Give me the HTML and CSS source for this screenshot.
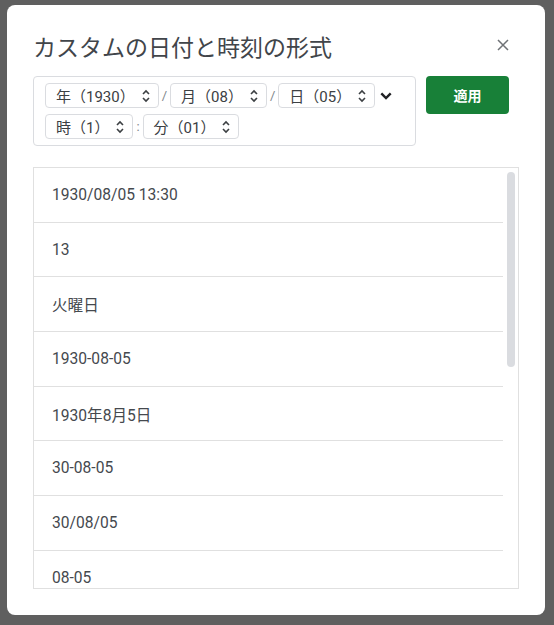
FILE: index.html
```html
<!DOCTYPE html>
<html lang="ja">
<head>
<meta charset="utf-8">
<title>カスタムの日付と時刻の形式</title>
<link rel="stylesheet" href="styles.css">
</head>
<body>
<div class="dialog">
  <div class="header">
    <div class="title">カスタムの日付と時刻の形式</div>
    <div class="close">
      <svg width="12" height="12" viewBox="0 0 12 12"><path d="M1 1 L11 11 M11 1 L1 11" stroke="#6f7276" stroke-width="1.5" fill="none"/></svg>
    </div>
  </div>
  <div class="format-row">
    <div class="format-box">
      <span class="chip">年（1930）<svg class="updown" width="8" height="14" viewBox="0 0 8 14"><path d="M1 5 L4 2 L7 5 M1 9 L4 12 L7 9" stroke="#3c4043" stroke-width="1.6" fill="none"/></svg></span>
      <span class="sep">/</span>
      <span class="chip">月（08）<svg class="updown" width="8" height="14" viewBox="0 0 8 14"><path d="M1 5 L4 2 L7 5 M1 9 L4 12 L7 9" stroke="#3c4043" stroke-width="1.6" fill="none"/></svg></span>
      <span class="sep">/</span>
      <span class="chip">日（05）<svg class="updown" width="8" height="14" viewBox="0 0 8 14"><path d="M1 5 L4 2 L7 5 M1 9 L4 12 L7 9" stroke="#3c4043" stroke-width="1.6" fill="none"/></svg></span>
      <span class="more"><svg width="12" height="8" viewBox="0 0 12 8"><path d="M1.3 1.3 L6 6 L10.7 1.3" stroke="#202124" stroke-width="2.4" fill="none"/></svg></span>
      <span class="chip">時（1）<svg class="updown" width="8" height="14" viewBox="0 0 8 14"><path d="M1 5 L4 2 L7 5 M1 9 L4 12 L7 9" stroke="#3c4043" stroke-width="1.6" fill="none"/></svg></span>
      <span class="sep">:</span>
      <span class="chip">分（01）<svg class="updown" width="8" height="14" viewBox="0 0 8 14"><path d="M1 5 L4 2 L7 5 M1 9 L4 12 L7 9" stroke="#3c4043" stroke-width="1.6" fill="none"/></svg></span>
    </div>
    <button class="apply">適用</button>
  </div>
  <div class="list">
    <div class="rows">
      <div class="row">1930/08/05 13:30</div>
      <div class="row">13</div>
      <div class="row">火曜日</div>
      <div class="row">1930-08-05</div>
      <div class="row">1930年8月5日</div>
      <div class="row">30-08-05</div>
      <div class="row">30/08/05</div>
      <div class="row">08-05</div>
    </div>
    <div class="track"><div class="thumb"></div></div>
  </div>
</div>
</body>
</html>
```

FILE: styles.css
```css
html, body {
  margin: 0;
  padding: 0;
  background: #5f5f5f;
  font-family: Roboto, "Noto Sans CJK JP", sans-serif;
  color: #3c4043;
}

.dialog {
  margin: 5px 0 0 7px;
  width: 538px;
  height: 610px;
  box-sizing: border-box;
  background: #ffffff;
  border-radius: 8px;
  padding: 0 26px 26px 26px;
  display: flex;
  flex-direction: column;
}

.header {
  display: flex;
  align-items: center;
  justify-content: space-between;
  height: 46px;
  margin-top: 18px;
  margin-bottom: 7px;
}

.title {
  font-family: "Noto Sans CJK JP", sans-serif;
  font-size: 23px;
  font-weight: 400;
  color: #41454a;
  white-space: nowrap;
}

.close {
  width: 24px;
  height: 24px;
  margin-right: 4px;
  margin-top: -3px;
  display: flex;
  align-items: center;
  justify-content: center;
}

.format-row {
  display: flex;
  align-items: flex-start;
}

.format-box {
  width: 383px;
  box-sizing: border-box;
  border: 1px solid #dadce0;
  border-radius: 4px;
  padding: 6px 8px 6px 11px;
  display: flex;
  flex-wrap: wrap;
  align-items: center;
  row-gap: 6px;
}

.chip {
  display: inline-flex;
  align-items: center;
  height: 25px;
  box-sizing: border-box;
  border: 1px solid #dadce0;
  border-radius: 4px;
  padding: 0 8px 0 10px;
  font-size: 15px;
  color: #3c4043;
  white-space: nowrap;
}

.updown {
  margin-left: 7px;
  flex: none;
}

.sep {
  font-size: 13px;
  color: #80868b;
  padding: 0 3px;
}

.more {
  display: inline-flex;
  align-items: center;
  margin-left: 5px;
  height: 25px;
  width: 12px;
}

.apply {
  margin-left: 10px;
  width: 83px;
  height: 38px;
  border: none;
  border-radius: 4px;
  background: #188038;
  color: #ffffff;
  font-family: "Noto Sans CJK JP", sans-serif;
  font-size: 14px;
  font-weight: 700;
  padding: 0;
}

.list {
  margin-top: 21px;
  flex: 1;
  min-height: 0;
  border: 1px solid #e0e0e0;
  display: flex;
  overflow: hidden;
}

.rows {
  flex: 1;
  overflow: hidden;
}

.row {
  height: 54.7px;
  box-sizing: border-box;
  border-bottom: 1px solid #e0e0e0;
  display: flex;
  align-items: center;
  padding-left: 18px;
  font-size: 15.6px;
  color: #45494e;
}

.track {
  width: 15px;
  flex: none;
}

.thumb {
  margin: 4px 0 0 4px;
  width: 8px;
  height: 195px;
  border-radius: 4px;
  background: #dadce0;
}
```
